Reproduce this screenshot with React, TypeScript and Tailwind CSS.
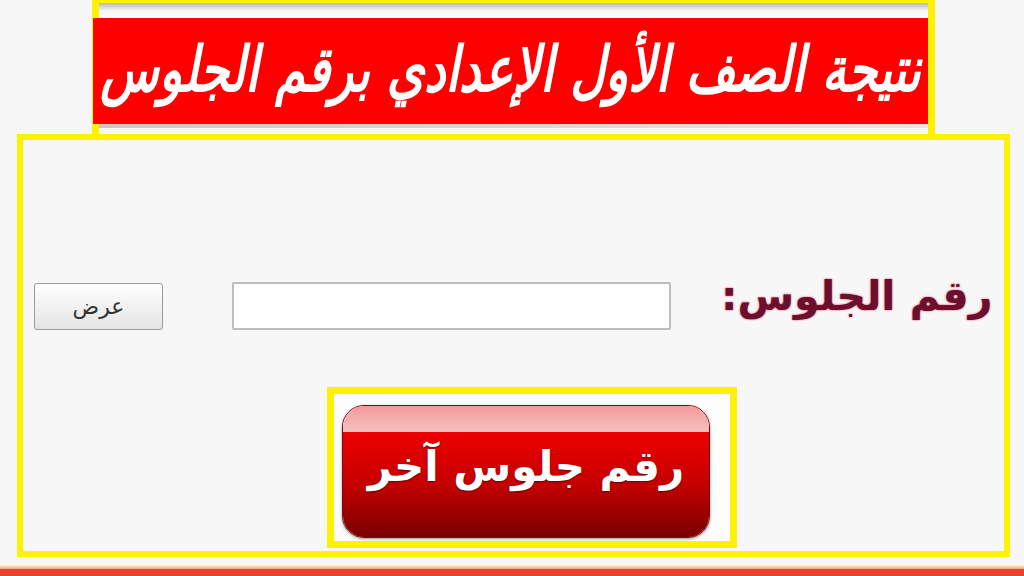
import React from 'react';

const arabic = { fontFamily: '"DejaVu Sans", "Noto Sans", sans-serif' };

export default function App() {
  return (
    <div className="flex h-[576px] w-[1024px] flex-col overflow-hidden bg-[#f6f6f6]" style={arabic}>
      {/* title banner */}
      <div className="ml-[92px] flex h-[134px] w-[843px] flex-col border-x-[7px] border-t-[3px] border-[#fff200]">
        <div className="h-[15px] bg-gradient-to-b from-[#b9b9b9] via-[#f4f4f4] to-[#ffffff]" />
        <div className="-ml-[6px] flex h-[106px] items-center justify-center overflow-hidden bg-[#ff0000]">
          <h1 dir="rtl" className="-mt-[4px] scale-y-[1.3] whitespace-nowrap text-[48px] font-bold italic leading-none text-white">
            نتيجة الصف الأول الإعدادي برقم الجلوس
          </h1>
        </div>
        <div className="h-[4px] bg-gradient-to-r from-[#c8c8c8] to-[#e6e6e6]" />
      </div>

      {/* form panel */}
      <div className="ml-[17px] flex h-[423px] w-[993px] flex-col border-[6px] border-[#fff200] bg-[#f7f7f7]">
        <div className="mt-[142px] flex h-[48px] items-center pl-[11px]">
          <button className="h-[47px] w-[129px] rounded-[3px] border border-[#9a9a9a] bg-gradient-to-b from-[#ffffff] to-[#e4e4e4] text-[22px] text-[#333]">
            عرض
          </button>
          <div className="ml-[69px] h-[48px] w-[439px] rounded-[2px] border-2 border-[#bdbdbd] bg-white" />
          <div dir="rtl" className="ml-[50px] -translate-y-[10px] whitespace-nowrap text-[41px] font-bold leading-none text-[#6a0f2e] [text-shadow:0_0_2px_#e0204a]">
            رقم الجلوس:
          </div>
        </div>

        <div className="ml-[304px] mt-[57px] h-[161px] w-[410px] border-[7px] border-[#fff200] bg-[#fdfdfd] pl-[8px] pt-[11px]">
          <button className="flex h-[133px] w-[368px] flex-col overflow-hidden rounded-[22px] border border-[#7a0a0a] shadow-[0_1px_3px_rgba(0,0,0,0.4)]">
            <div className="h-[26px] w-full bg-gradient-to-b from-[#f29a9a] to-[#f6c0c0]" />
            <div className="flex w-full flex-1 items-center justify-center bg-gradient-to-b from-[#ee0000] via-[#c50000] to-[#7a0000]">
              <span dir="rtl" className="-mt-[36px] whitespace-nowrap text-[42px] font-bold text-white [text-shadow:0_1px_2px_rgba(0,0,0,0.5)]">
                رقم جلوس آخر
              </span>
            </div>
          </button>
        </div>
      </div>

      <div className="mt-[8px] h-[4px] bg-gradient-to-b from-[#fff6c0] to-[#f3a08c]" />
      <div className="flex-1 bg-[#e8442f]" />
    </div>
  );
}
